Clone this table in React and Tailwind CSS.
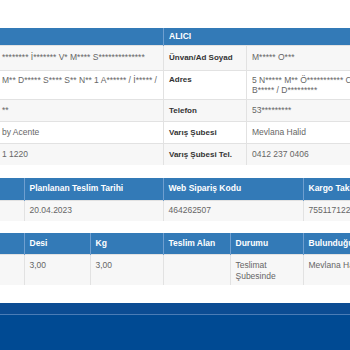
import React from 'react';

const th = 'bg-[#337ab7] text-white font-bold text-[8.5px] text-left px-[5px] border-l border-[#6f9fd0] first:border-l-0 whitespace-nowrap overflow-hidden';
const td = 'px-[5px] text-[#666] text-[8.5px] border-t border-l border-[#e2e2e2] first:border-l-0 align-middle';
const lbl = 'px-[5px] text-[#333] font-bold border-t border-l border-[#e2e2e2] align-middle whitespace-nowrap';

const App = () => {
  return (
    <div className="w-[350px] h-[350px] overflow-hidden bg-white font-['Liberation_Sans',Arial,sans-serif] text-[8px] leading-[11px] flex flex-col">
      <div className="ml-[-116px] w-[700px] pt-[28px]">
        {/* Gönderici / Alıcı */}
        <table className="w-full table-fixed border-collapse">
          <colgroup>
            <col className="w-[112px]" />
            <col className="w-[167px]" />
            <col className="w-[83px]" />
            <col />
          </colgroup>
          <thead>
            <tr className="h-[17px]">
              <th colSpan={2} className={th}>GÖNDERİCİ</th>
              <th colSpan={2} className={th}>ALICI</th>
            </tr>
          </thead>
          <tbody>
            <tr className="h-[25px] bg-[#f7f7f7]">
              <td className={lbl}>Ünvan/Ad Soyad</td>
              <td className={td}>******** İ******* V* M**** S**************</td>
              <td className={lbl}>Ünvan/Ad Soyad</td>
              <td className={td}>M***** O***</td>
            </tr>
            <tr className="h-[29px]">
              <td className={lbl + ' align-top pt-[4px]'}>Adres</td>
              <td className={td + ' align-top pt-[4px] leading-[10px] whitespace-nowrap'}>M** D***** S**** S** N** 1 A****** / İ***** /</td>
              <td className={lbl + ' align-top pt-[4px] leading-[10px]'}>Adres</td>
              <td className={td + ' align-top pt-[4px] leading-[10px]'}>5 N***** M** Ö*********** C*******<br />B***** / D*********</td>
            </tr>
            <tr className="h-[22px] bg-[#f7f7f7]">
              <td className={lbl}>Telefon</td>
              <td className={td}>**</td>
              <td className={lbl}>Telefon</td>
              <td className={td}>53*********</td>
            </tr>
            <tr className="h-[22px]">
              <td className={lbl}>Çıkış Şubesi</td>
              <td className={td}>by Acente</td>
              <td className={lbl}>Varış Şubesi</td>
              <td className={td}>Mevlana Halid</td>
            </tr>
            <tr className="h-[22px] bg-[#f7f7f7]">
              <td className={lbl}>Çıkış Tel.</td>
              <td className={td}>1 1220</td>
              <td className={lbl}>Varış Şubesi Tel.</td>
              <td className={td}>0412 237 0406</td>
            </tr>
          </tbody>
        </table>

        {/* Teslim bilgisi */}
        <table className="w-full table-fixed border-collapse mt-[13px]">
          <colgroup>
            <col className="w-[140px]" />
            <col className="w-[139px]" />
            <col className="w-[140px]" />
            <col className="w-[140px]" />
            <col />
          </colgroup>
          <thead>
            <tr className="h-[22px]">
              <th className={th}>Gönderi Tarihi</th>
              <th className={th}>Planlanan Teslim Tarihi</th>
              <th className={th}>Web Sipariş Kodu</th>
              <th className={th}>Kargo Takip No</th>
              <th className={th}>Ödeme Tipi</th>
            </tr>
          </thead>
          <tbody>
            <tr className="h-[21px] bg-[#f7f7f7]">
              <td className={td}>18.04.2023</td>
              <td className={td}>20.04.2023</td>
              <td className={td}>464262507</td>
              <td className={td}>755117122257</td>
              <td className={td}>Gönderici Ödemeli</td>
            </tr>
          </tbody>
        </table>

        {/* Hareket */}
        <table className="w-full table-fixed border-collapse mt-[12px]">
          <colgroup>
            <col className="w-[140px]" />
            <col className="w-[66px]" />
            <col className="w-[73px]" />
            <col className="w-[67px]" />
            <col className="w-[73px]" />
            <col className="w-[140px]" />
            <col />
          </colgroup>
          <thead>
            <tr className="h-[21px]">
              <th className={th}>Adet</th>
              <th className={th}>Desi</th>
              <th className={th}>Kg</th>
              <th className={th}>Teslim Alan</th>
              <th className={th}>Durumu</th>
              <th className={th}>Bulunduğu Şube</th>
              <th className={th}>İşlem Tarihi</th>
            </tr>
          </thead>
          <tbody>
            <tr className="h-[31px] bg-[#f7f7f7]">
              <td className={td + ' align-top pt-[5px]'}>1</td>
              <td className={td + ' align-top pt-[5px]'}>3,00</td>
              <td className={td + ' align-top pt-[5px]'}>3,00</td>
              <td className={td + ' align-top pt-[5px]'}></td>
              <td className={td + ' align-top pt-[5px]'}>Teslimat Şubesinde</td>
              <td className={td + ' align-top pt-[5px]'}>Mevlana Halid</td>
              <td className={td + ' align-top pt-[5px]'}>20.04.2023</td>
            </tr>
          </tbody>
        </table>
      </div>

      <div className="mt-[18px] flex-1 flex flex-col bg-[#004a93]">
        <div className="h-[12px] bg-[#0b4c93] border-b border-[#4a7cb6]"></div>
        <div className="flex-1"></div>
      </div>
    </div>
  );
};

export default App;
